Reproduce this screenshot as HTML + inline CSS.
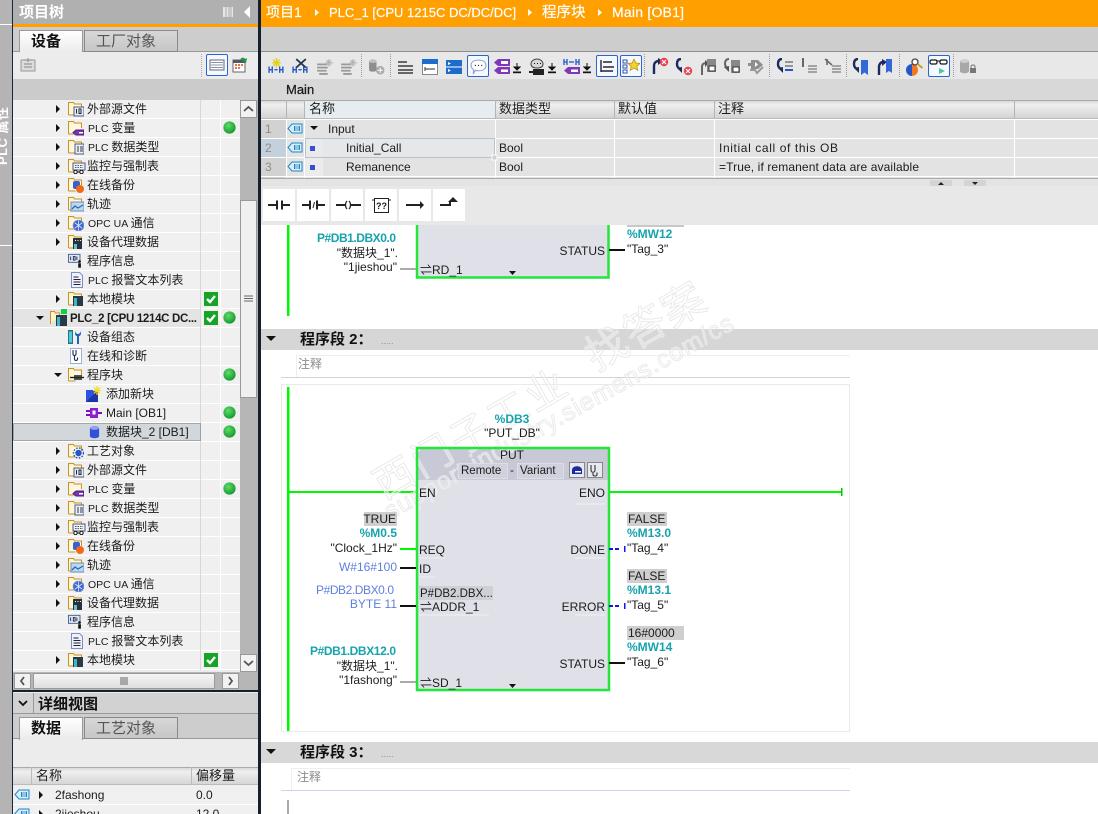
<!DOCTYPE html>
<html><head><meta charset="utf-8"><style>
html,body{margin:0;padding:0;width:1098px;height:814px;overflow:hidden;background:#fff}
svg{display:block;position:absolute;left:0;top:0}
text{font-family:"Liberation Sans","Noto Sans CJK SC",sans-serif;font-size:12px;fill:#1c1c1c;white-space:pre}
.s{font-size:10.5px}
.b{font-weight:bold}
.w{fill:#fff}
.e{text-anchor:end}
.m{text-anchor:middle}
.teal{fill:#17a3ad}
.blue{fill:#5f7fdc}
.gr{fill:#8c8c8c}
.hd{font-size:15px;font-weight:bold;fill:#111}
.wm{fill:rgba(255,255,255,.4);stroke:#e8e8e8;stroke-width:.9px}
</style></head><body>
<svg width="1098" height="814" viewBox="0 0 1098 814" xmlns="http://www.w3.org/2000/svg">
<defs>
<linearGradient id="h" x1="0" y1="0" x2="0" y2="1"><stop offset="0" stop-color="#d2d2d2"/><stop offset=".25" stop-color="#efefef"/><stop offset="1" stop-color="#d4d4d4"/></linearGradient>
<linearGradient id="tab" x1="0" y1="0" x2="0" y2="1"><stop offset="0" stop-color="#fff"/><stop offset="1" stop-color="#ececec"/></linearGradient>
<linearGradient id="tab2" x1="0" y1="0" x2="0" y2="1"><stop offset="0" stop-color="#d8d8d8"/><stop offset="1" stop-color="#c6c6c6"/></linearGradient>
<linearGradient id="sb" x1="0" y1="0" x2="0" y2="1"><stop offset="0" stop-color="#f6f6f6"/><stop offset="1" stop-color="#dedede"/></linearGradient>
<radialGradient id="gd" cx=".4" cy=".35" r=".7"><stop offset="0" stop-color="#5fdc6a"/><stop offset="1" stop-color="#12952a"/></radialGradient>
<pattern id="rows" x="0" y="100" width="10" height="19" patternUnits="userSpaceOnUse"><rect width="10" height="19" fill="#f0f0f0"/><rect y="18" width="10" height="1" fill="#fff"/></pattern>

<symbol id="fo" viewBox="0 0 16 16"><path d="M.5 14V1.5h5l1 1.5h7v5" fill="#fff3c8" stroke="#c8922a"/><path d="M.5 14h7" stroke="#c8922a"/><rect x="1.5" y="4" width="11" height="9" fill="#fff8dc"/></symbol>
<symbol id="dot" viewBox="0 0 14 14"><circle cx="7" cy="7" r="6.6" fill="url(#gd)"/></symbol>
<symbol id="chk" viewBox="0 0 14 14"><rect width="14" height="14" fill="#16a326"/><path d="M3 7l3 3 5-6" fill="none" stroke="#fff" stroke-width="2.4"/></symbol>
<symbol id="ar" viewBox="0 0 6 10"><path d="M1 1l4 4-4 4z" fill="#111"/></symbol>
<symbol id="ad" viewBox="0 0 10 6"><path d="M1 1h8l-4 4z" fill="#111"/></symbol>
<symbol id="tag" viewBox="0 0 16 12"><path d="M5 1h10v9H5L1 5.500z" fill="#d8ecfa" stroke="#1d88c4"/><rect x="7" y="3" width="6" height="5" fill="#1d88c4"/><path d="M9 3v5M11 3v5" stroke="#fff"/></symbol>

<symbol id="fsrc" viewBox="0 0 16 16"><use href="#fo" width="16" height="16"/><rect x="6" y="6" width="10" height="9" fill="#e8ecf4" stroke="#4a5a80"/><path d="M8.500 8v4.500M11 8v4.500h2V8z" fill="none" stroke="#223"/></symbol>
<symbol id="ftag" viewBox="0 0 16 16"><use href="#fo" width="16" height="16"/><path d="M8 10h8v5H8l-3-2.500z" fill="#7a34b0" stroke="#4e1c80"/><rect x="11" y="12" width="4" height="1.500" fill="#fff"/></symbol>
<symbol id="ftyp" viewBox="0 0 16 16"><use href="#fo" width="16" height="16"/><rect x="7" y="5" width="9" height="10" fill="#eef2f8" stroke="#4a5a80"/><path d="M10 7v6M12 8h3M12 10h3M12 12h3" stroke="#334"/></symbol>
<symbol id="fwat" viewBox="0 0 18 16"><use href="#fo" width="16" height="16"/><rect x="5" y="5" width="12" height="7" fill="#eef2f8" stroke="#4a5a80"/><path d="M7 7.500h8M7 9.500h8" stroke="#556" stroke-dasharray="1.500 1"/><circle cx="7.500" cy="14" r="1.700" fill="#fff" stroke="#111"/><circle cx="13.500" cy="14" r="1.700" fill="#fff" stroke="#111"/><path d="M9 14h3" stroke="#111"/></symbol>
<symbol id="fbak" viewBox="0 0 16 16"><use href="#fo" width="16" height="16"/><rect x="5" y="4" width="7" height="8" rx="2" fill="#3560d8"/><circle cx="12" cy="12" r="4" fill="#f06a18"/></symbol>
<symbol id="ftra" viewBox="0 0 16 16"><use href="#fo" width="16" height="16"/><rect x="3" y="6" width="13" height="9" fill="#bcd8f0" stroke="#6c90b8"/><path d="M4 13l3-3 3 2 5-3" fill="none" stroke="#2a6ab0" stroke-width="1.300"/></symbol>
<symbol id="fopc" viewBox="0 0 16 16"><use href="#fo" width="16" height="16"/><circle cx="10.500" cy="10.500" r="5.300" fill="#3c68c8" stroke="#6c8adc"/><path d="M7 8l7 5M14 8l-7 5M10.500 5.500v10" stroke="#dfe8ff" stroke-width=".8"/></symbol>
<symbol id="fprx" viewBox="0 0 16 16"><use href="#fo" width="16" height="16"/><rect x="5" y="4" width="9" height="11" fill="#27323e"/><path d="M7 6.500h1M9.500 6.500h1M12 6.500h1" stroke="#fff" stroke-dasharray="1 1"/><rect x="6" y="10" width="3" height="5" fill="#63c0d0"/></symbol>
<symbol id="floc" viewBox="0 0 16 16"><use href="#fo" width="16" height="16"/><rect x="5" y="5" width="10" height="10" fill="#2b3845"/><rect x="6" y="7" width="3" height="8" fill="#3db8c8"/></symbol>
<symbol id="fprg" viewBox="0 0 16 16"><use href="#fo" width="16" height="16"/><rect x="6" y="8" width="8" height="5" fill="#50555c"/><path d="M2 10.500h14" stroke="#222" stroke-width="1.400"/></symbol>
<symbol id="fcog" viewBox="0 0 16 16"><use href="#fo" width="16" height="16"/><circle cx="10.500" cy="10" r="3.200" fill="#2456c8"/><circle cx="10.500" cy="10" r="5" fill="none" stroke="#2456c8" stroke-width="1.500" stroke-dasharray="1.500 1.500"/></symbol>
<symbol id="info" viewBox="0 0 18 16"><rect x=".5" y=".5" width="13" height="9" fill="#dfe8f6" stroke="#3a5a98"/><path d="M3 3v4M6 3h2v4H6zM10 3v4" fill="none" stroke="#223"/><circle cx="13" cy="8.500" r="1.500" fill="#111"/><rect x="11.500" y="10.500" width="3" height="5" fill="#111"/></symbol>
<symbol id="doc" viewBox="0 0 14 16"><path d="M1.500.500h8l3 3v12h-11z" fill="#eef2fb" stroke="#7c8cc8"/><path d="M3.500 5h5M3.500 7.500h7M3.500 10h7M3.500 12.500h7" stroke="#223"/></symbol>
<symbol id="conf" viewBox="0 0 16 16"><rect x="0" y="1" width="5" height="14" fill="#2e6f80"/><rect x="1" y="2.500" width="3" height="11" fill="#48d0e0"/><path d="M7 1c0 3 2 4 3 4s3-1 3-4v3c0 2-1 3-2 3v8H9V7C8 7 7 6 7 4z" fill="#1f63b8"/></symbol>
<symbol id="diag" viewBox="0 0 12 16"><rect x=".5" y=".5" width="11" height="15" fill="#fff" stroke="#9cb2d8"/><path d="M3 2v4c0 2 3 2 3 0V2M4.500 8v3c0 2 3 2 3 0V9.500" fill="none" stroke="#1c2a50" stroke-width="1.100"/></symbol>
<symbol id="newb" viewBox="0 0 16 16"><rect x="0" y="4" width="12" height="12" fill="#2d52e0"/><path d="M0 16L12 4v12z" fill="#1c34a8"/><path d="M11 0v9M7 4.500h8M8 1.500l6 6M14 1.500l-6 6" stroke="#f6dc18" stroke-width="1.200"/></symbol>
<symbol id="ob" viewBox="0 0 16 12"><rect x="4" y="1" width="8" height="10" fill="#8a1ed0"/><rect x="6.500" y="3.500" width="3" height="4" fill="#fff"/><path d="M0 4h4M0 8h4M12 6h4" stroke="#7a10c0" stroke-width="2"/></symbol>
<symbol id="db" viewBox="0 0 12 14"><path d="M1 2.500v9c0 3 10 3 10 0v-9z" fill="#3550d8"/><ellipse cx="6" cy="2.500" rx="5" ry="2.200" fill="#8ea0f0"/></symbol>
<symbol id="plc" viewBox="0 0 18 18"><path d="M.500 15V2.500h4l1 1.500h4v3" fill="#fff3c8" stroke="#c8922a"/><rect x="6" y="6" width="11" height="11" fill="#2b3845"/><rect x="7" y="8" width="3" height="9" fill="#3db8c8"/><rect x="11" y="0" width="6" height="5" fill="#12d040"/></symbol>

<symbol id="star" viewBox="0 0 16 16"><path d="M1 8v6M4 8v6M1 11h3M11 8v6M14 8v6M11 11h3M6 11h3" stroke="#2456c8" stroke-width="1.300" fill="none"/><path d="M8 0v9M4 4.500h8M5 1.500l6 6M11 1.500l-6 6" stroke="#e4d018" stroke-width="1.300"/></symbol>
<symbol id="xx" viewBox="0 0 16 16"><path d="M1 8v6M4 8v6M1 11h3M11 8v6M14 8v6M11 11h3M6 11h3" stroke="#2456c8" stroke-width="1.300" fill="none"/><path d="M4 1l9 8M13 1L4 9" stroke="#25344e" stroke-width="1.600"/></symbol>
<symbol id="gst" viewBox="0 0 16 16"><path d="M1 6h9M1 9h10M1 12h9M3 15h8" stroke="#9a9a9a" stroke-width="1.700"/><path d="M12 1v7M9 4.500h7M10 2l4 5M14 2l-4 5" stroke="#b4b4b4"/></symbol>
<symbol id="dbg" viewBox="0 0 16 16"><path d="M1 3v8c0 2.500 7 2.500 7 0V3z" fill="#8e8e8e"/><ellipse cx="4.500" cy="3" rx="3.500" ry="1.800" fill="#c0c0c0"/><circle cx="11.500" cy="11.500" r="4" fill="#aaa"/><path d="M9 11.500h5M11.500 9v5" stroke="#fff"/></symbol>
<symbol id="li1" viewBox="0 0 16 16"><path d="M0 3h9M0 7h15M0 11h15M0 14h15" stroke="#666" stroke-width="2"/></symbol>
<symbol id="li2" viewBox="0 0 16 16"><rect x=".5" y=".5" width="15" height="15" fill="#fff" stroke="#888"/><rect x="0" y="0" width="16" height="5" fill="#1c6ccc"/><path d="M3 10h10M3 8v4" stroke="#555" stroke-width="1.200"/></symbol>
<symbol id="li3" viewBox="0 0 16 16"><rect x="0" y="1" width="16" height="14" fill="#1c6ccc"/><path d="M0 8h16" stroke="#fff"/><path d="M2 3l3 1.500L2 6M2 10l3 1.500L2 13" fill="#fff"/></symbol>
<symbol id="bub" viewBox="0 0 16 16"><path d="M1 7c0-3.500 3-5 7-5s7 1.500 7 5-3 5-7 5c-1 0-2 0-3-.400L3 15l.500-4C2 10 1 8.500 1 7z" fill="#fff" stroke="#90a0c8"/><path d="M4.500 7h1M7.500 7h1M10.500 7h1" stroke="#223"/></symbol>
<symbol id="tg2" viewBox="0 0 18 18"><path d="M5 1h12v7H5L1 4.500z" fill="#8038b8"/><path d="M5 9h12v7H5l-4-3.500z" fill="#8038b8"/><rect x="8" y="3" width="7" height="3" fill="#fff"/><rect x="8" y="11.500" width="7" height="2.500" fill="#fff"/></symbol>
<symbol id="dl" viewBox="0 0 8 12"><path d="M4 1v5M1 5h6L4 8z" fill="#111" stroke="#111"/><rect x="0" y="9.500" width="8" height="1.700" fill="#111"/></symbol>
<symbol id="chat" viewBox="0 0 18 18"><path d="M3 6c0-3 3-5 6-5s6 2 6 5-3 4-6 4-6-1-6-4z" fill="#d8d8d8" stroke="#444"/><path d="M6 5.500h1M9 5.500h1M12 5.500h1" stroke="#111"/><rect x="5" y="11" width="11" height="6" fill="#222"/><path d="M1 14h4" stroke="#222" stroke-width="2"/></symbol>
<symbol id="hh" viewBox="0 0 18 18"><path d="M1 1v6M4 1v6M1 4h3M13 1v6M16 1v6M13 4h3M6 4h5" stroke="#2456c8" stroke-width="1.300"/><path d="M5 9h12v7H5l-4-3.500z" fill="#8038b8"/><rect x="8" y="11.500" width="7" height="2.500" fill="#fff"/></symbol>
<symbol id="lst" viewBox="0 0 16 16"><path d="M2 2v12" stroke="#223" stroke-width="1.400"/><path d="M4 4h9M4 9h11M2 13h12" stroke="#223" stroke-width="1.600"/></symbol>
<symbol id="fav" viewBox="0 0 18 18"><rect x="1" y="2" width="4" height="3" fill="#fff" stroke="#3252a8"/><rect x="1" y="7" width="4" height="3" fill="#fff" stroke="#3252a8"/><rect x="1" y="12" width="4" height="3" fill="#fff" stroke="#3252a8"/><path d="M12 1l1.800 4 4.200.4-3.200 2.800 1 4.200L12 10l-3.800 2.400 1-4.200L6 5.400l4.200-.4z" fill="#f8d028" stroke="#b08810" stroke-width=".7"/></symbol>
<symbol id="ce1" viewBox="0 0 18 18"><path d="M3 17V9c0-3 2-5 5-5" fill="none" stroke="#1c2a60" stroke-width="2.400"/><path d="M7 1l5 3-5 4z" fill="#1c2a60"/><circle cx="13" cy="5" r="4.200" fill="#e84050"/><path d="M11 3l4 4M15 3l-4 4" stroke="#fff" stroke-width="1.200"/></symbol>
<symbol id="ce2" viewBox="0 0 18 18"><path d="M6 1C3 1 2 3 2 6c0 2 1 4 3 5" fill="none" stroke="#1c2a60" stroke-width="2.400"/><path d="M2 10l5-1v6z" fill="#1c2a60"/><circle cx="13" cy="13" r="4.200" fill="#e84050"/><path d="M11 11l4 4M15 11l-4 4" stroke="#fff" stroke-width="1.200"/></symbol>
<symbol id="cm1" viewBox="0 0 18 18"><path d="M3 17V9c0-3 2-4 4-4" fill="none" stroke="#666" stroke-width="2"/><path d="M6 2l4 3-4 4z" fill="#555"/><rect x="8" y="1" width="9" height="13" fill="#888"/><rect x="10" y="8" width="6" height="5" fill="#fff" stroke="#333"/></symbol>
<symbol id="cm2" viewBox="0 0 18 18"><path d="M6 1C3 1 2 3 2 6c0 2 1 3 2 4" fill="none" stroke="#666" stroke-width="2"/><path d="M1 9l5-1v6z" fill="#555"/><rect x="8" y="2" width="9" height="13" fill="#888"/><rect x="10" y="9" width="6" height="5" fill="#fff" stroke="#333"/></symbol>
<symbol id="chg" viewBox="0 0 18 18"><path d="M1 5h3V2h7l5 5-5 4H4V8H1z" fill="#8e8e8e"/><path d="M8 4v5l3-2.500z" fill="#fff"/><path d="M3 12h5l2 3 6-6" fill="none" stroke="#999" stroke-width="2"/></symbol>
<symbol id="nv1" viewBox="0 0 18 18"><path d="M6 1C3 1 2 3 2 6c0 2 1 4 3 5" fill="none" stroke="#1c2a60" stroke-width="2.400"/><path d="M2 10l5-1v6z" fill="#1c2a60"/><path d="M9 4h8M9 8h8" stroke="#888" stroke-width="1.700"/><path d="M9 12h8" stroke="#2456c8" stroke-width="2"/></symbol>
<symbol id="nv2" viewBox="0 0 18 18"><rect x="2" y="0" width="2" height="9" fill="#666"/><path d="M8 8h9M8 11h9M8 14h9" stroke="#999" stroke-width="1.800"/></symbol>
<symbol id="nv3" viewBox="0 0 18 18"><path d="M1 1l7 6M3 1v6" stroke="#666" stroke-width="1.500"/><path d="M8 8h9M8 11h9M8 14h9" stroke="#999" stroke-width="1.800"/></symbol>
<symbol id="bm1" viewBox="0 0 18 18"><path d="M6 1C3 1 2 3 2 6c0 2 1 4 3 5" fill="none" stroke="#1c2a60" stroke-width="2.400"/><path d="M2 10l5-1v6z" fill="#1c2a60"/><path d="M9 2h7v15l-3.500-2.500L9 17z" fill="#3468d8"/></symbol>
<symbol id="bm2" viewBox="0 0 18 18"><path d="M3 17V9c0-3 2-5 4-5" fill="none" stroke="#1c2a60" stroke-width="2.400"/><path d="M6 1l5 3-5 4z" fill="#1c2a60"/><path d="M10 1h6v14l-3-2-3 2z" fill="#3468d8"/></symbol>
<symbol id="mag" viewBox="0 0 18 18"><path d="M6 6a6 6 0 0 0 0 12z" fill="#2456c8"/><path d="M6 6a6 6 0 0 1 0 12z" fill="#f07820"/><circle cx="9" cy="4" r="3" fill="#fff" stroke="#444" stroke-width="1.300"/><path d="M11.500 6l5 4" stroke="#c8a020" stroke-width="2"/></symbol>
<symbol id="gl" viewBox="0 0 20 18"><rect x="1" y="2" width="7" height="4" rx="1.500" fill="#fff" stroke="#111" stroke-width="1.200"/><rect x="11" y="2" width="7" height="4" rx="1.500" fill="#fff" stroke="#111" stroke-width="1.200"/><path d="M8 3h3" stroke="#111"/><path d="M10 10l6 3-6 3z" fill="#4cc89c"/></symbol>
<symbol id="dbl" viewBox="0 0 18 18"><path d="M1 3v10c0 3 9 3 9 0V3z" fill="#a8a8a8"/><ellipse cx="5.500" cy="3" rx="4.500" ry="2" fill="#d0d0d0"/><rect x="11" y="10" width="6" height="5" fill="#777"/><path d="M12 10V8.500c0-2 4-2 4 0V10" fill="none" stroke="#777"/></symbol>
</defs>

<!-- left strip -->
<rect width="12" height="814" fill="#b4b4b4"/>
<rect y="24" width="12" height="1" fill="#fff"/><rect y="245" width="12" height="1" fill="#fff"/>
<text class="w b" transform="rotate(-90 7 165)" x="7" y="165" style="font-size:13px" textLength="58">PLC 属性</text>
<rect x="12" width="1" height="814" fill="#1a2638"/>

<!-- project tree panel -->
<rect x="13" width="245" height="692" fill="#ececec"/>
<rect x="13" width="245" height="24" fill="#b0b0b0"/>
<text class="w b" x="19" y="17" style="font-size:15px">项目树</text>
<path d="M223 7h10v10h-10z" fill="#e6e6e6"/><path d="M226 7v10M229 7v10M231 7v10" stroke="#aaa"/>
<path d="M250 6v12l-6-6z" fill="#fff"/>
<rect x="13" y="24" width="245" height="3" fill="#ff9f00"/>
<rect x="13" y="27" width="245" height="25" fill="#cdcdcd"/>
<rect x="13" y="51" width="245" height="1" fill="#999"/>
<rect x="19.500" y="30.500" width="63" height="22" fill="url(#tab)" stroke="#999"/>
<rect x="20" y="50" width="62" height="3" fill="#ececec"/>
<rect x="84.500" y="30.500" width="93" height="21" fill="url(#tab2)" stroke="#8a8a8a"/>
<text class="b" x="31" y="46" style="font-size:15px;fill:#111">设备</text>
<text x="96" y="46" style="font-size:15px;fill:#555">工厂对象</text>
<rect x="13" y="52" width="245" height="27" fill="#ececec"/>
<rect x="21" y="60" width="14" height="11" fill="#dcdcdc" stroke="#999"/><path d="M28 58v4M24 60l8 0M24 64h8M24 67h8" stroke="#888"/>
<path d="M201.500 54v24" stroke="#aaa" stroke-dasharray="1 1"/>
<rect x="206.500" y="54.500" width="21" height="21" rx="1.500" fill="#f4f8ff" stroke="#2b63cf"/>
<rect x="210" y="60" width="14" height="10" fill="#fff" stroke="#667"/><path d="M211 62.500h12M211 65h12M211 67.500h12" stroke="#8894aa"/>
<rect x="233" y="60" width="12" height="12" fill="#fff" stroke="#666"/><rect x="233" y="60" width="12" height="3" fill="#556"/><path d="M235 65h2M238 65h2M241 65h2M235 68h2M238 68h2" stroke="#d04818" stroke-width="1.500"/><path d="M240 60c1-3 4-3 5-1l2-1-1 5-4-2 1-1c-1-1-2-1-3 0z" fill="#1c9838"/>
<rect x="13" y="79" width="245" height="21" fill="#cbcbcb"/>

<!-- tree rows -->
<rect x="13" y="100" width="227" height="572" fill="url(#rows)"/>
<rect x="200" y="100" width="1" height="572" fill="#d8d8d8"/><rect x="220" y="100" width="1" height="572" fill="#fff"/>
<rect x="13" y="309" width="187" height="18" fill="#e4e4e4"/>
<rect x="13.500" y="423.500" width="187" height="17" fill="#d2d7db" stroke="#666" stroke-dasharray="1 1"/>

<!-- rows: arrows and icons -->
<use href="#ar" x="55" y="104" width="6" height="10"/><use href="#fsrc" x="68" y="101" width="16" height="16"/><text x="87" y="113">外部源文件</text>
<use href="#ar" x="55" y="123" width="6" height="10"/><use href="#ftag" x="68" y="120" width="16" height="16"/><text x="88" y="132"><tspan class="s">PLC </tspan>变量</text>
<use href="#ar" x="55" y="142" width="6" height="10"/><use href="#ftyp" x="68" y="139" width="16" height="16"/><text x="88" y="151"><tspan class="s">PLC </tspan>数据类型</text>
<use href="#ar" x="55" y="161" width="6" height="10"/><use href="#fwat" x="68" y="158" width="18" height="16"/><text x="87" y="170">监控与强制表</text>
<use href="#ar" x="55" y="180" width="6" height="10"/><use href="#fbak" x="68" y="177" width="16" height="16"/><text x="87" y="189">在线备份</text>
<use href="#ar" x="55" y="199" width="6" height="10"/><use href="#ftra" x="68" y="196" width="16" height="16"/><text x="87" y="208">轨迹</text>
<use href="#ar" x="55" y="218" width="6" height="10"/><use href="#fopc" x="68" y="215" width="16" height="16"/><text x="88" y="227"><tspan class="s">OPC UA </tspan>通信</text>
<use href="#ar" x="55" y="237" width="6" height="10"/><use href="#fprx" x="68" y="234" width="16" height="16"/><text x="87" y="246">设备代理数据</text>
<use href="#info" x="68" y="253" width="16" height="16"/><text x="87" y="265">程序信息</text>
<use href="#doc" x="70" y="272" width="14" height="16"/><text x="88" y="284"><tspan class="s">PLC </tspan>报警文本列表</text>
<use href="#ar" x="55" y="294" width="6" height="10"/><use href="#floc" x="68" y="291" width="16" height="16"/><text x="87" y="303">本地模块</text>
<use href="#ad" x="35" y="315" width="10" height="6"/><use href="#plc" x="50" y="309" width="18" height="18"/><text class="b" x="70" y="322" style="font-size:11.500px" textLength="127">PLC_2 [CPU 1214C DC...</text>
<use href="#conf" x="68" y="329" width="16" height="16"/><text x="87" y="341">设备组态</text>
<use href="#diag" x="70" y="348" width="12" height="16"/><text x="87" y="360">在线和诊断</text>
<use href="#ad" x="53" y="372" width="10" height="6"/><use href="#fprg" x="68" y="367" width="16" height="16"/><text x="87" y="379">程序块</text>
<use href="#newb" x="86" y="386" width="16" height="16"/><text x="106" y="398">添加新块</text>
<use href="#ob" x="86" y="407" width="16" height="12"/><text x="106" y="417">Main [OB1]</text>
<use href="#db" x="89" y="425" width="11" height="14"/><text x="106" y="436">数据块_2 [DB1]</text>
<use href="#ar" x="55" y="446" width="6" height="10"/><use href="#fcog" x="68" y="443" width="16" height="16"/><text x="87" y="455">工艺对象</text>
<use href="#ar" x="55" y="465" width="6" height="10"/><use href="#fsrc" x="68" y="462" width="16" height="16"/><text x="87" y="474">外部源文件</text>
<use href="#ar" x="55" y="484" width="6" height="10"/><use href="#ftag" x="68" y="481" width="16" height="16"/><text x="88" y="493"><tspan class="s">PLC </tspan>变量</text>
<use href="#ar" x="55" y="503" width="6" height="10"/><use href="#ftyp" x="68" y="500" width="16" height="16"/><text x="88" y="512"><tspan class="s">PLC </tspan>数据类型</text>
<use href="#ar" x="55" y="522" width="6" height="10"/><use href="#fwat" x="68" y="519" width="18" height="16"/><text x="87" y="531">监控与强制表</text>
<use href="#ar" x="55" y="541" width="6" height="10"/><use href="#fbak" x="68" y="538" width="16" height="16"/><text x="87" y="550">在线备份</text>
<use href="#ar" x="55" y="560" width="6" height="10"/><use href="#ftra" x="68" y="557" width="16" height="16"/><text x="87" y="569">轨迹</text>
<use href="#ar" x="55" y="579" width="6" height="10"/><use href="#fopc" x="68" y="576" width="16" height="16"/><text x="88" y="588"><tspan class="s">OPC UA </tspan>通信</text>
<use href="#ar" x="55" y="598" width="6" height="10"/><use href="#fprx" x="68" y="595" width="16" height="16"/><text x="87" y="607">设备代理数据</text>
<use href="#info" x="68" y="614" width="16" height="16"/><text x="87" y="626">程序信息</text>
<use href="#doc" x="70" y="633" width="14" height="16"/><text x="88" y="645"><tspan class="s">PLC </tspan>报警文本列表</text>
<use href="#ar" x="55" y="655" width="6" height="10"/><use href="#floc" x="68" y="652" width="16" height="16"/><text x="87" y="664">本地模块</text>

<!-- status -->
<use href="#dot" x="223" y="121" width="13" height="13"/>
<use href="#chk" x="204" y="292" width="14" height="14"/>
<use href="#chk" x="204" y="311" width="14" height="14"/><use href="#dot" x="223" y="311" width="13" height="13"/>
<use href="#dot" x="223" y="368" width="13" height="13"/>
<use href="#dot" x="223" y="406" width="13" height="13"/>
<use href="#dot" x="223" y="425" width="13" height="13"/>
<use href="#dot" x="223" y="482" width="13" height="13"/>
<use href="#chk" x="204" y="653" width="14" height="14"/>

<!-- v scroll -->
<rect x="240" y="100" width="18" height="572" fill="#b6b6b6"/>
<rect x="240.500" y="100.500" width="16" height="17" fill="#f2f2f2" stroke="#999"/>
<path d="M244 111l4.500-4 4.500 4" fill="none" stroke="#555" stroke-width="1.800"/>
<rect x="240.500" y="200.500" width="16" height="197" fill="#f0f0f0" stroke="#999"/>
<path d="M244 296h9M244 298.500h9M244 301h9" stroke="#666"/>
<rect x="240.500" y="654.500" width="16" height="17" fill="#f2f2f2" stroke="#999"/>
<path d="M244 661l4.500 4 4.500-4" fill="none" stroke="#555" stroke-width="1.800"/>
<!-- h scroll -->
<rect x="13" y="670" width="227" height="2" fill="#ececec"/>
<rect x="13" y="672" width="245" height="18" fill="#b6b6b6"/>
<rect x="14.500" y="673.500" width="16" height="15" fill="#f2f2f2" stroke="#999"/>
<path d="M24 677l-3 4 3 4" fill="none" stroke="#555" stroke-width="1.800"/>
<rect x="33.500" y="673.500" width="181" height="15" fill="url(#sb)" stroke="#999"/>
<path d="M121 677v8M123 677v8M125 677v8M127 677v8" stroke="#666"/>
<rect x="222.500" y="673.500" width="16" height="15" fill="#f2f2f2" stroke="#999"/>
<path d="M229 677l3 4-3 4" fill="none" stroke="#555" stroke-width="1.800"/>
<rect x="13" y="690" width="245" height="2.500" fill="#14202e"/>

<!-- detail view -->
<rect x="13" y="692" width="245" height="122" fill="#ececec"/>
<rect x="13" y="693" width="245" height="21" fill="#d2d2d2"/>
<rect x="13" y="713" width="245" height="1" fill="#999"/>
<rect x="33" y="693" width="1" height="20" fill="#999"/>
<path d="M19 701l4 4 4-4" fill="none" stroke="#111" stroke-width="1.800"/>
<text class="hd" x="38" y="709">详细视图</text>
<rect x="13" y="714" width="245" height="25" fill="#cdcdcd"/>
<rect x="13" y="738" width="245" height="1" fill="#999"/>
<rect x="19.500" y="717.500" width="63" height="22" fill="url(#tab)" stroke="#999"/>
<rect x="20" y="737" width="62" height="3" fill="#ececec"/>
<rect x="84.500" y="717.500" width="93" height="21" fill="url(#tab2)" stroke="#8a8a8a"/>
<text class="b" x="31" y="733" style="font-size:15px;fill:#111">数据</text>
<text x="96" y="733" style="font-size:15px;fill:#555">工艺对象</text>
<rect x="13" y="767" width="245" height="18" fill="url(#h)"/>
<rect x="13" y="767" width="245" height="1" fill="#aaa"/><rect x="13" y="784" width="245" height="1" fill="#bbb"/>
<rect x="31" y="767" width="1" height="18" fill="#bbb"/><rect x="191" y="767" width="1" height="18" fill="#bbb"/>
<text x="36" y="780" style="font-size:13px">名称</text><text x="196" y="780" style="font-size:13px">偏移量</text>
<rect x="13" y="785" width="245" height="29" fill="#f0f0f0"/>
<rect x="13" y="804" width="245" height="1" fill="#fff"/>
<use href="#tag" x="14" y="789" width="16" height="12"/>
<use href="#ar" x="38" y="790" width="6" height="10"/>
<text x="55" y="799">2fashong</text><text x="196" y="799">0.0</text>
<use href="#tag" x="14" y="808" width="16" height="12"/>
<use href="#ar" x="38" y="809" width="6" height="10"/>
<text x="55" y="818">2jieshou</text><text x="196" y="818">12.0</text>

<rect x="258" width="3" height="814" fill="#14202e"/>

<!-- right header -->
<rect x="261" width="837" height="27" fill="#ff9f00"/>
<text class="w" x="266" y="17" style="font-size:14px;stroke:#fff;stroke-width:.2px">项目1</text>
<path d="M315 9l4 3.500-4 3.500zM528 9l4 3.500-4 3.500zM598 9l4 3.500-4 3.500z" fill="#fff"/>
<text class="w" x="329" y="17" style="font-size:13px;stroke:#fff;stroke-width:.2px">PLC_1 [CPU 1215C DC/DC/DC]</text>
<text class="w" x="542" y="17" style="font-size:14.500px;stroke:#fff;stroke-width:.2px">程序块</text>
<text class="w" x="612" y="17" style="font-size:14px;stroke:#fff;stroke-width:.2px" textLength="72">Main [OB1]</text>
<rect x="261" y="27" width="837" height="25" fill="#cdcdcd"/>
<rect x="261" y="51" width="837" height="1" fill="#8e8e8e"/>
<rect x="261" y="52" width="837" height="27" fill="#e8e8e8"/>
<rect x="261" y="79" width="837" height="21" fill="#d8d8d8"/>
<text class="b" x="286" y="94" style="font-size:13px;font-weight:normal;stroke:#111;stroke-width:.25px">Main</text>

<!-- toolbar -->
<path d="M361.500 54v24M390.500 54v24M769.500 54v24M899.500 54v24M846.500 54v24M953.500 54v24M644.500 54v24" stroke="#999" stroke-dasharray="1 1"/>
<rect x="467.500" y="55.500" width="21" height="21" rx="1.500" fill="#f4f8ff" stroke="#2b63cf"/>
<rect x="596.500" y="55.500" width="21" height="21" rx="1.500" fill="#f4f8ff" stroke="#2b63cf"/>
<rect x="620.500" y="55.500" width="21" height="21" rx="1.500" fill="#f4f8ff" stroke="#2b63cf"/>
<rect x="928.500" y="55.500" width="21" height="21" rx="1.500" fill="#f4f8ff" stroke="#2b63cf"/>
<use href="#star" x="268" y="58" width="17" height="17"/>
<use href="#xx" x="292" y="58" width="17" height="17"/>
<use href="#gst" x="316" y="58" width="17" height="17"/>
<use href="#gst" x="340" y="58" width="17" height="17"/>
<use href="#dbg" x="368" y="58" width="17" height="17"/>
<use href="#li1" x="398" y="59" width="16" height="16"/>
<use href="#li2" x="422" y="59" width="16" height="16"/>
<use href="#li3" x="446" y="59" width="16" height="16"/>
<use href="#bub" x="470" y="58" width="17" height="17"/>
<use href="#tg2" x="493" y="58" width="18" height="18"/><use href="#dl" x="513" y="62" width="8" height="12"/>
<use href="#chat" x="528" y="58" width="18" height="18"/><use href="#dl" x="548" y="62" width="8" height="12"/>
<use href="#hh" x="563" y="58" width="18" height="18"/><use href="#dl" x="583" y="62" width="8" height="12"/>
<use href="#lst" x="599" y="58" width="16" height="16"/>
<use href="#fav" x="622" y="58" width="18" height="18"/>
<use href="#ce1" x="651" y="57" width="18" height="18"/>
<use href="#ce2" x="675" y="58" width="18" height="18"/>
<use href="#cm1" x="699" y="58" width="18" height="18"/>
<use href="#cm2" x="723" y="58" width="18" height="18"/>
<use href="#chg" x="747" y="58" width="18" height="18"/>
<use href="#nv1" x="776" y="58" width="18" height="18"/>
<use href="#nv2" x="800" y="58" width="18" height="18"/>
<use href="#nv3" x="824" y="58" width="18" height="18"/>
<use href="#bm1" x="852" y="58" width="18" height="18"/>
<use href="#bm2" x="876" y="58" width="18" height="18"/>
<use href="#mag" x="906" y="58" width="18" height="18"/>
<use href="#gl" x="929" y="58" width="20" height="18"/>
<use href="#dbl" x="959" y="58" width="18" height="18"/>

<!-- interface table -->
<rect x="261" y="100" width="837" height="86" fill="#dcdcdc"/>
<rect x="261" y="100" width="837" height="18" fill="url(#h)"/>
<rect x="261" y="100" width="837" height="1" fill="#aaa"/>
<rect x="261" y="118" width="837" height="1" fill="#bbb"/>
<rect x="305" y="101" width="190" height="17" fill="#e6edf1"/>
<path d="M286.500 100v18M304.500 100v18M495.500 100v18M614.500 100v18M714.500 100v18M1014.500 100v18" stroke="#b4b4b4"/>
<text x="309" y="113" style="font-size:13px">名称</text><text x="499" y="113" style="font-size:13px">数据类型</text><text x="618" y="113" style="font-size:13px">默认值</text><text x="718" y="113" style="font-size:13px">注释</text>
<rect x="261" y="119" width="837" height="60" fill="#e3e3e3"/>
<rect x="261" y="119" width="25" height="60" fill="#d2d2d2"/>
<rect x="261" y="139" width="25" height="18" fill="#c4d0dc"/>
<rect x="305" y="158" width="18" height="19" fill="#ececec"/><rect x="305" y="139" width="18" height="18" fill="#ececec"/>
<rect x="305" y="139" width="190" height="18" fill="#e8eaec" opacity=".6"/>
<path d="M261 119.500h837M261 138.500h837M261 157.500h837M261 176.500h837" stroke="#fff"/>
<path d="M286.500 119v60M304.500 119v60M495.500 119v60M614.500 119v60M714.500 119v60M1014.500 119v60" stroke="#fff"/>
<rect x="305.500" y="138.500" width="189" height="19" fill="none" stroke="#b8c4cc"/>
<rect x="492" y="155" width="5" height="5" fill="#c8d0d8" stroke="#fff"/>
<text class="gr" x="265" y="133">1</text><text class="gr" x="265" y="152">2</text><text class="gr" x="265" y="171">3</text>
<use href="#tag" x="287" y="123" width="16" height="12"/>
<use href="#tag" x="287" y="142" width="16" height="12"/>
<use href="#tag" x="287" y="161" width="16" height="12"/>
<path d="M310 126h8l-4 4z" fill="#111"/>
<text x="328" y="133">Input</text>
<rect x="310" y="146" width="5" height="5" fill="#3552c8"/><rect x="310" y="165" width="5" height="5" fill="#3552c8"/>
<text x="346" y="152">Initial_Call</text><text x="346" y="171">Remanence</text>
<text x="499" y="152">Bool</text><text x="499" y="171">Bool</text>
<text x="719" y="152" textLength="119">Initial call of this OB</text><text x="719" y="171" textLength="200">=True, if remanent data are available</text>
<rect x="261" y="179" width="837" height="7" fill="#e4e4e4"/>
<rect x="261" y="178" width="837" height="1" fill="#aaa"/>
<rect x="930" y="180" width="22" height="6" fill="#d4d4d4"/><path d="M938 185l3-3 3 3z" fill="#222"/>
<rect x="964" y="180" width="22" height="6" fill="#d4d4d4"/><path d="M972 182l3 3 3-3z" fill="#222"/>

<!-- LAD bar -->
<rect x="261" y="186" width="837" height="39" fill="#e8e8e8"/>
<rect x="263" y="189" width="32" height="32" fill="#fff"/><rect x="297" y="189" width="32" height="32" fill="#fff"/><rect x="331" y="189" width="32" height="32" fill="#fff"/><rect x="365" y="189" width="32" height="32" fill="#fff"/><rect x="399" y="189" width="32" height="32" fill="#fff"/><rect x="433" y="189" width="32" height="32" fill="#fff"/>
<path d="M268 205h9M277 200.500v9M282 200.500v9M282 205h8M302 205h8M310 200.500v9M317 200.500v9M317 205h8M336 205h9M351 205h10M406 205h14" fill="none" stroke="#222" stroke-width="2"/>
<path d="M314.500 202l-1.500 6" stroke="#222"/>
<path d="M347 201c-2 2-2 6 0 8M349 201c2 2 2 6 0 8" fill="none" stroke="#222" stroke-width="1.200"/>
<rect x="374.500" y="198.500" width="14" height="14" fill="#fff" stroke="#222"/><path d="M372 200h3M388 200h3" stroke="#222"/>
<text x="376" y="209" style="font-size:9px;font-weight:bold">??</text>
<path d="M420 201l4 4-4 4z" fill="#222"/>
<path d="M440 205h10v-4" fill="none" stroke="#222" stroke-width="2"/><path d="M453 197l-5 5h10z" fill="#222"/>

<!-- editor -->
<rect x="261" y="225" width="837" height="589" fill="#fff"/>
<rect x="287" y="225" width="2.500" height="91" fill="#00f800"/>
<rect x="627" y="225" width="57" height="2" fill="#c8c8c8"/>
<rect x="417" y="225" width="192" height="52" fill="#e0e0e8"/>
<path d="M417 225v52.500h191.500V225" fill="none" stroke="#22e63a" stroke-width="2.500"/>
<text class="teal b e" x="396" y="242" textLength="79">P#DB1.DBX0.0</text>
<text class="e" x="398" y="257">"数据块_1".</text>
<text class="e" x="397" y="271">"1jieshou"</text>
<path d="M400 269h16" stroke="#aaa" stroke-width="2"/>
<text x="420" y="274">⇌RD_1</text>
<path d="M509 271h7l-3.500 4z" fill="#111"/>
<text class="e" x="605" y="255">STATUS</text>
<path d="M609 250h16" stroke="#111" stroke-width="2"/>
<text class="teal b" x="627" y="238">%MW12</text>
<text x="627" y="253">"Tag_3"</text>

<!-- network 2 -->
<rect x="261" y="329" width="837" height="21" fill="#d6d6d6"/>
<path d="M266 336h10l-5 5z" fill="#111"/>
<text class="hd" x="300" y="344">程序段 2：</text>
<text class="gr" x="381" y="344" style="font-size:9px">.....</text>
<path d="M296 355.500h554M296.500 355v22" stroke="#eee"/>
<text class="gr" x="298" y="368">注释</text>
<rect x="281" y="377" width="569" height="1" fill="#d4d0e0"/>
<rect x="281.500" y="384.500" width="568" height="347" fill="#fff" stroke="#eaeaea"/>
<rect x="287" y="387" width="2.500" height="344" fill="#00f800"/>
<rect x="289" y="491" width="127" height="2" fill="#00f800"/>
<rect x="610" y="491" width="232" height="2" fill="#00f800"/>
<rect x="841" y="488" width="1.500" height="8" fill="#00c800"/>

<!-- block background -->
<rect x="417" y="448" width="192" height="242" fill="#e0e0e8"/>
<rect x="417" y="448" width="192" height="32" fill="#c8c9d6"/>

<!-- watermark -->
<text class="wm" transform="rotate(-30 384 500)" x="384" y="500" style="font-size:40px" textLength="215">西门子工业</text>
<text class="wm" transform="rotate(-30 596 372)" x="596" y="372" style="font-size:42px" textLength="130">找答案</text>
<text class="wm" transform="rotate(-29 390 520)" x="390" y="520" style="font-size:25px" textLength="395">support.industry.siemens.com/cs</text>

<!-- block -->
<rect x="417" y="448" width="192" height="242" fill="none" stroke="#22e63a" stroke-width="2.500"/>
<text class="teal m b" x="512" y="423">%DB3</text>
<text class="m" x="512" y="437">"PUT_DB"</text>
<text class="m" x="512" y="459">PUT</text>
<rect x="458.500" y="463.500" width="49" height="15" fill="#d0d1dc" stroke="#dcdde6"/>
<rect x="517.500" y="463.500" width="46" height="15" fill="#d0d1dc" stroke="#dcdde6"/>
<text x="461" y="474" style="font-size:11.500px">Remote</text><text x="510" y="474">-</text><text x="520" y="474" style="font-size:11.500px">Variant</text>
<rect x="569.500" y="462.500" width="15" height="15" fill="#e8e8f0" stroke="#888"/><path d="M572 474v-4c0-5 10-5 10 0v4z" fill="#1c2aa0"/><rect x="575" y="471" width="6" height="1.500" fill="#fff"/>
<rect x="587.500" y="462.500" width="15" height="15" fill="#e8e8f0" stroke="#888"/><path d="M591 465v5c0 3 4 3 4 0v-5M593 473v1.500c0 2 4 2 4 0v-2" fill="none" stroke="#333" stroke-width="1.100"/>

<path d="M575 504h30M419 558h26M575 558h30M419 577h16M575 615h30M419 615h70" stroke="#f0f0f4"/>
<text x="419" y="497">EN</text><text class="e" x="605" y="497">ENO</text>
<text x="419" y="554">REQ</text><text x="419" y="573">ID</text>
<rect x="419" y="586" width="74" height="14" fill="#cfcfd6"/>
<text x="420" y="597" style="font-size:11.500px">P#DB2.DBX...</text>
<text x="420" y="611">⇌ADDR_1</text>
<text x="420" y="687">⇌SD_1</text>
<path d="M509 684h7l-3.500 4z" fill="#111"/>
<text class="e" x="605" y="554">DONE</text><text class="e" x="605" y="611">ERROR</text><text class="e" x="605" y="668">STATUS</text>

<!-- left operands -->
<rect x="364" y="512" width="33" height="14" fill="#cfcfcf"/>
<text class="e" x="396" y="523">TRUE</text>
<text class="teal b e" x="397" y="537">%M0.5</text>
<text class="e" x="397" y="552">"Clock_1Hz"</text>
<path d="M400 549h16" stroke="#00f800" stroke-width="2"/>
<text class="blue e" x="397" y="571">W#16#100</text>
<path d="M400 568h16" stroke="#111" stroke-width="2"/>
<text class="blue e" x="394" y="594" textLength="78">P#DB2.DBX0.0</text>
<text class="blue e" x="397" y="608">BYTE 11</text>
<path d="M400 606h16" stroke="#111" stroke-width="2"/>
<text class="teal b e" x="396" y="655" textLength="86">P#DB1.DBX12.0</text>
<text class="e" x="398" y="670">"数据块_1".</text>
<text class="e" x="397" y="684">"1fashong"</text>
<path d="M400 682h16" stroke="#aaa" stroke-width="2"/>

<!-- right operands -->
<rect x="627" y="512" width="40" height="14" fill="#cfcfcf"/>
<text x="628" y="523">FALSE</text>
<text class="teal b" x="627" y="537">%M13.0</text>
<text x="627" y="552">"Tag_4"</text>
<path d="M609 549h12" stroke="#1414f0" stroke-width="2" stroke-dasharray="4 2"/><rect x="624" y="546" width="1.500" height="6" fill="#1414f0"/>
<rect x="627" y="569" width="40" height="14" fill="#cfcfcf"/>
<text x="628" y="580">FALSE</text>
<text class="teal b" x="627" y="594">%M13.1</text>
<text x="627" y="609">"Tag_5"</text>
<path d="M609 606h12" stroke="#1414f0" stroke-width="2" stroke-dasharray="4 2"/><rect x="624" y="603" width="1.500" height="6" fill="#1414f0"/>
<rect x="627" y="626" width="57" height="14" fill="#cfcfcf"/>
<text x="628" y="637">16#0000</text>
<text class="teal b" x="627" y="651">%MW14</text>
<text x="627" y="666">"Tag_6"</text>
<path d="M609 663h16" stroke="#111" stroke-width="2"/>

<!-- network 3 -->
<rect x="261" y="742" width="837" height="21" fill="#d8d8d8"/>
<path d="M266 749h10l-5 5z" fill="#111"/>
<text class="hd" x="300" y="757">程序段 3：</text>
<text class="gr" x="381" y="757" style="font-size:9px">.....</text>
<path d="M291 768.500h559M291.500 768v22" stroke="#eee"/>
<text class="gr" x="297" y="781">注释</text>
<rect x="281" y="790" width="569" height="1" fill="#d4d0e8"/>
<rect x="287" y="800" width="2" height="14" fill="#aaa"/>
</svg>
</body></html>
